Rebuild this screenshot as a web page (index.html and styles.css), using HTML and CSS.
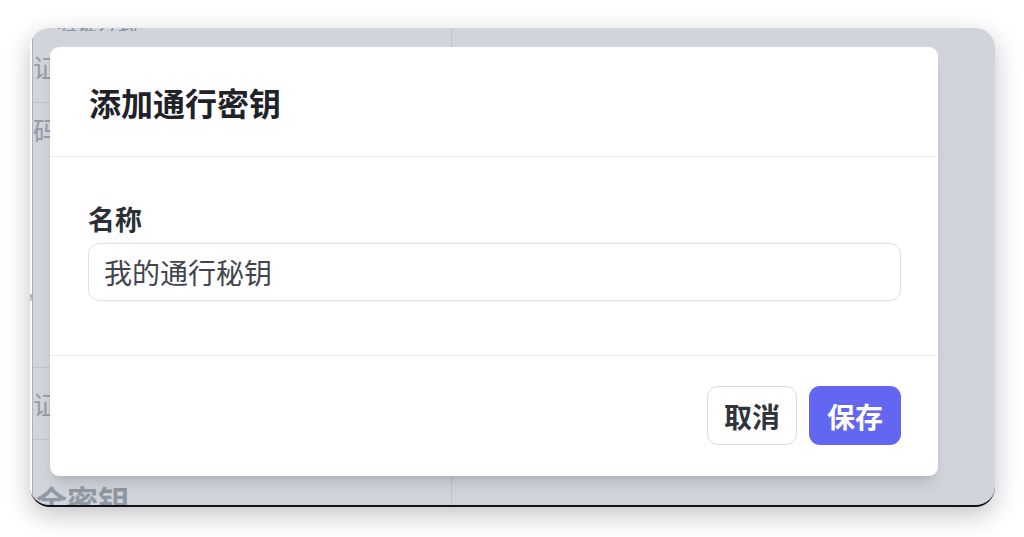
FILE: index.html
```html
<!DOCTYPE html>
<html lang="zh-CN">
<head>
<meta charset="utf-8">
<title>添加通行密钥</title>
<link rel="stylesheet" href="styles.css">
</head>
<body>
<div class="frame">
  <div class="app">
    <div class="col">
      <div class="cut-top"><span>验证方式</span></div>
      <div class="row row-a"><span class="bg-text">证</span></div>
      <div class="row row-b"><span class="bg-text">码</span><span class="dash"></span><span class="bg-text comma">，</span></div>
      <div class="row row-d"><span class="bg-text">证</span></div>
      <div class="row row-e"><span class="bg-head">全密钥</span></div>
    </div>
    <div class="col-right"></div>
  </div>
  <div class="overlay">
    <div class="modal">
      <div class="modal-header">
        <h2 class="modal-title">添加通行密钥</h2>
      </div>
      <div class="modal-body">
        <label class="field-label" for="name">名称</label>
        <input class="field-input" id="name" type="text" value="我的通行秘钥">
      </div>
      <div class="modal-footer">
        <button class="btn btn-cancel" type="button">取消</button>
        <button class="btn btn-save" type="button">保存</button>
      </div>
    </div>
  </div>
</div>
</body>
</html>
```

FILE: styles.css
```css
* { box-sizing: border-box; }

html, body {
  margin: 0;
  padding: 0;
  background: #ffffff;
  font-family: "Noto Sans CJK SC", "Noto Sans", sans-serif;
}

body {
  padding: 28px 0 0 30px;
  height: 537px;
  overflow: hidden;
}

.frame {
  position: relative;
  width: 965px;
  height: 479px;
  border-radius: 20px;
  border-bottom: 2px solid #111214;
  overflow: hidden;
  background: #ffffff;
  box-shadow: 0 8px 26px rgba(0, 0, 0, 0.24);
}

/* background page (under the overlay) */
.app {
  display: flex;
  height: 100%;
}

.col {
  width: 422px;
  border-right: 1px solid #e3e6ea;
  border-left: 2px solid #ffffff;
  padding-left: 1px;
  box-shadow: inset 1px 0 0 #c9cdd4;
}

.cut-top {
  height: 3px;
  overflow: hidden;
  display: flex;
  align-items: flex-end;
  padding-left: 24px;
}

.cut-top span {
  font-size: 20px;
  line-height: 20px;
  color: #9aa0a9;
  margin-bottom: -2px;
}

.row {
  display: flex;
  align-items: center;
  border-bottom: 1px solid #e6e8eb;
}

.bg-text {
  font-size: 26px;
  color: #a7adb6;
  line-height: 30px;
}

.row-a { height: 72px; }

.row-b {
  height: 265px;
  align-items: flex-start;
  flex-direction: column;
  padding-top: 12px;
}

.dash {
  width: 4px;
  height: 1px;
  background: #a7adb6;
  margin: -4px 0 0 26px;
}

.bg-text.comma {
  font-size: 22px;
  margin-top: 132px;
  margin-left: -8px;
}

.row-d { height: 72px; }

.row-e {
  height: 60px;
  align-items: flex-start;
  border-bottom: none;
  padding: 44px 0 0 3px;
}

.bg-head {
  font-size: 31px;
  line-height: 32px;
  font-weight: 700;
  color: #a3a9b2;
}

.col-right { flex: 1; }

/* overlay + modal */
.overlay {
  position: absolute;
  inset: 0 0 0 2px;
  background: rgba(104, 114, 132, 0.3);
  display: flex;
  align-items: flex-start;
  padding: 19px 0 0 18px;
}

.modal {
  width: 888px;
  height: 429px;
  background: #ffffff;
  border-radius: 9px;
  display: flex;
  flex-direction: column;
  box-shadow: 0 12px 16px -6px rgba(0, 0, 0, 0.14), 0 4px 8px -4px rgba(0, 0, 0, 0.08);
}

.modal-header {
  height: 110px;
  display: flex;
  align-items: center;
  padding: 0 39px;
  border-bottom: 1.5px solid #eceef1;
}

.modal-title {
  margin: 0;
  font-size: 32px;
  line-height: 36px;
  font-weight: 700;
  color: #1f2329;
}

.modal-body {
  height: 199px;
  display: flex;
  flex-direction: column;
  padding: 44px 37px 0 38px;
  border-bottom: 1.5px solid #eceef1;
}

.field-label {
  font-size: 27px;
  line-height: 36px;
  font-weight: 700;
  color: #2b2f36;
  margin-bottom: 6px;
}

.field-input {
  height: 58px;
  width: 100%;
  border: 1.5px solid #dde1e7;
  border-radius: 11px;
  padding: 0 15px;
  font-family: "Noto Sans CJK SC", "Noto Sans", sans-serif;
  font-size: 28px;
  color: #3f4650;
  background: #ffffff;
  outline: none;
}

.modal-footer {
  flex: 1;
  display: flex;
  justify-content: flex-end;
  align-items: flex-start;
  gap: 12px;
  padding: 30px 37px 0 0;
}

.btn {
  height: 59px;
  border-radius: 11px;
  font-family: "Noto Sans CJK SC", "Noto Sans", sans-serif;
  font-size: 28px;
  font-weight: 700;
  line-height: 1;
  padding: 0;
  cursor: pointer;
}

.btn-cancel {
  width: 90px;
  background: #ffffff;
  border: 1.5px solid #d6dae0;
  color: #30343b;
}

.btn-save {
  width: 92px;
  background: #6366f1;
  border: none;
  color: #ffffff;
}
```
